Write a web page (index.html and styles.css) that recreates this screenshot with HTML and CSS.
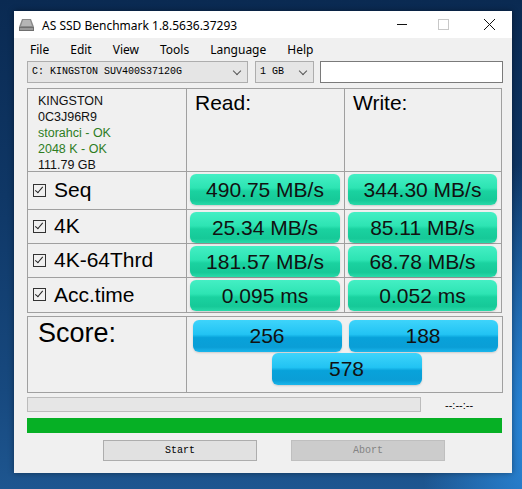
FILE: index.html
```html
<!DOCTYPE html>
<html lang="en">
<head>
    <meta charset="UTF-8">
    <title>AS SSD Benchmark</title>
    <link rel="stylesheet" href="styles.css">
</head>
<body>
<div class="window">
    <div class="titlebar">
        <svg class="app-icon" width="17" height="14" viewBox="0 0 17 14">
            <path d="M4 1h9l3 8H1z" fill="#8a8a8a"/>
            <path d="M5 2h7l2 6H3z" fill="#b5b5b5"/>
            <rect x="1" y="9" width="15" height="4" fill="#6f6f6f"/>
            <rect x="2" y="10" width="13" height="2" fill="#9a9a9a"/>
        </svg>
        <span class="title">AS SSD Benchmark 1.8.5636.37293</span>
        <div class="controls">
            <svg width="46" height="27" viewBox="0 0 46 27"><path d="M23 13.5h10" stroke="#111" stroke-width="1"/></svg>
            <svg width="46" height="27" viewBox="0 0 46 27"><rect x="18.5" y="8.5" width="10" height="10" fill="none" stroke="#c8c8c8"/></svg>
            <svg width="46" height="27" viewBox="0 0 46 27"><path d="M18 8l11 11M29 8L18 19" stroke="#111" stroke-width="1"/></svg>
        </div>
    </div>

    <div class="menubar">
        <span>File</span><span>Edit</span><span>View</span><span>Tools</span><span>Language</span><span>Help</span>
    </div>

    <div class="toolbar">
        <div class="combo drive">C: KINGSTON SUV400S37120G<span class="arrow"></span></div>
        <div class="combo size">1 GB<span class="arrow"></span></div>
        <div class="textbox"></div>
    </div>

    <div class="results">
        <div class="cell info">
            <div>KINGSTON</div>
            <div>0C3J96R9</div>
            <div class="ok">storahci - OK</div>
            <div class="ok">2048 K - OK</div>
            <div>111.79 GB</div>
        </div>
        <div class="cell head">Read:</div>
        <div class="cell head">Write:</div>

        <div class="cell label"><span class="check"></span>Seq</div>
        <div class="cell"><div class="val">490.75 MB/s</div></div>
        <div class="cell"><div class="val">344.30 MB/s</div></div>

        <div class="cell label"><span class="check"></span>4K</div>
        <div class="cell"><div class="val">25.34 MB/s</div></div>
        <div class="cell"><div class="val">85.11 MB/s</div></div>

        <div class="cell label"><span class="check"></span>4K-64Thrd</div>
        <div class="cell"><div class="val">181.57 MB/s</div></div>
        <div class="cell"><div class="val">68.78 MB/s</div></div>

        <div class="cell label"><span class="check"></span>Acc.time</div>
        <div class="cell"><div class="val">0.095 ms</div></div>
        <div class="cell"><div class="val">0.052 ms</div></div>
    </div>

    <div class="score">
        <div class="score-label">Score:</div>
        <div class="score-values">
            <div class="sval">256</div>
            <div class="sval">188</div>
            <div class="sval total">578</div>
        </div>
    </div>

    <div class="progress-row">
        <div class="progress"></div>
        <span class="time">--:--:--</span>
    </div>
    <div class="total-bar"></div>

    <div class="buttons">
        <div class="btn">Start</div>
        <div class="btn disabled">Abort</div>
    </div>
</div>
</body>
</html>
```

FILE: styles.css
```css
body {
    margin: 0;
    width: 522px;
    height: 489px;
    overflow: hidden;
    background:
        radial-gradient(ellipse 120px 260px at 540px 420px, #2a8be0 0%, rgba(30, 110, 200, 0) 100%),
        linear-gradient(to bottom, #0a2a52 0%, #0f3766 40%, #17497f 80%, #1e5690 100%);
    font-family: "Liberation Sans", Arial, sans-serif;
}

.window {
    margin: 11px 0 0 14px;
    width: 498px;
    height: 462px;
    background: #f0f0f0;
    box-shadow: 0 0 6px rgba(0, 0, 0, 0.4);
}

.titlebar {
    height: 27px;
    background: #fff;
    display: flex;
    align-items: center;
    font-family: "Noto Sans", "Open Sans", sans-serif;
    font-size: 12px;
    color: #000;
}

.app-icon {
    margin: 0 7px 0 4px;
}

.title {
    flex: 1;
    padding-top: 1px;
}

.controls {
    display: flex;
}

.menubar {
    height: 22px;
    display: flex;
    align-items: center;
    padding-left: 10px;
    font-family: "Noto Sans", "Open Sans", sans-serif;
    font-size: 12px;
}

.menubar span {
    padding: 0 6px;
    margin-right: 9px;
}

.toolbar {
    display: flex;
    margin: 1px 0 0 13px;
    height: 22px;
}

.combo {
    position: relative;
    height: 20px;
    border: 1px solid #adadad;
    background: #e5e5e5;
    font-family: "Liberation Mono", monospace;
    font-size: 10px;
    line-height: 20px;
    padding-left: 4px;
    box-sizing: content-box;
}

.combo .arrow {
    position: absolute;
    right: 7px;
    top: 6px;
    width: 5px;
    height: 5px;
    border-right: 1px solid #555;
    border-bottom: 1px solid #555;
    transform: rotate(45deg);
}

.drive {
    width: 215px;
}

.size {
    width: 53px;
    margin-left: 7px;
}

.textbox {
    width: 181px;
    height: 20px;
    margin-left: 6px;
    border: 1px solid #7a7a7a;
    background: #fff;
}

.results {
    margin: 5px 0 0 13px;
    display: grid;
    grid-template-columns: 159px 158px 157px;
    grid-template-rows: 83px 38px 34px 34px 35px;
    border-top: 1px solid #a0a0a0;
    border-left: 1px solid #a0a0a0;
    width: 474px;
}

.cell {
    border-right: 1px solid #a0a0a0;
    border-bottom: 1px solid #a0a0a0;
    padding: 2px 4px 0 3px;
}

.info {
    padding: 4px 0 0 10px;
    font-size: 12.5px;
    line-height: 16px;
    color: #111;
}

.info .ok {
    color: #2e7d1f;
}

.head {
    font-size: 21px;
    padding: 2px 0 0 8px;
}

.label {
    display: flex;
    align-items: center;
    font-size: 21px;
    padding: 0 0 1px 5px;
}

.check {
    width: 11px;
    height: 11px;
    border: 1px solid #333;
    margin-right: 8px;
    position: relative;
    flex-shrink: 0;
}

.check::after {
    content: "";
    position: absolute;
    left: 3px;
    top: 0;
    width: 3px;
    height: 7px;
    border-right: 1px solid #222;
    border-bottom: 1px solid #222;
    transform: rotate(40deg);
}

.val, .sval {
    height: 31px;
    border-radius: 6px;
    text-align: center;
    font-size: 21px;
    line-height: 32px;
    color: #111;
    box-shadow: 0 1px 2px rgba(0, 0, 0, 0.15);
}

.val {
    background: linear-gradient(to bottom, #44efc4 0%, #2de4b3 45%, #1ad2a0 55%, #16c998 85%, #28daa9 100%);
}

.score {
    margin: 3px 0 0 13px;
    width: 474px;
    height: 75px;
    border: 1px solid #a0a0a0;
    display: grid;
    grid-template-columns: 159px 1fr;
}

.score-label {
    border-right: 1px solid #a0a0a0;
    font-size: 27px;
    padding: 1px 0 0 10px;
}

.score-values {
    display: flex;
    flex-wrap: wrap;
    justify-content: center;
    align-content: flex-start;
    column-gap: 7px;
    row-gap: 1px;
    padding: 3px 4px 0 5px;
}

.sval {
    width: 149px;
    height: 32px;
    background: linear-gradient(to bottom, #3ed4fb 0%, #22c3f3 45%, #08a2da 55%, #0a9ed6 85%, #1ab6ec 100%);
}

.sval.total {
    width: 150px;
    margin-left: 3px;
}

.progress-row {
    display: flex;
    align-items: center;
    margin: 4px 0 0 13px;
    height: 15px;
}

.progress {
    width: 392px;
    height: 13px;
    border: 1px solid #bcbcbc;
    background: #e6e6e6;
}

.time {
    margin-left: 24px;
    font-size: 11px;
}

.total-bar {
    margin: 6px 0 0 13px;
    width: 475px;
    height: 15px;
    background: #06b025;
}

.buttons {
    display: flex;
    gap: 34px;
    margin: 7px 0 0 89px;
}

.btn {
    width: 152px;
    height: 19px;
    border: 1px solid #adadad;
    background: #e1e1e1;
    text-align: center;
    font-family: "Liberation Mono", monospace;
    font-size: 10px;
    line-height: 19px;
}

.btn.disabled {
    background: #cccccc;
    border-color: #bfbfbf;
    color: #838383;
}
```
